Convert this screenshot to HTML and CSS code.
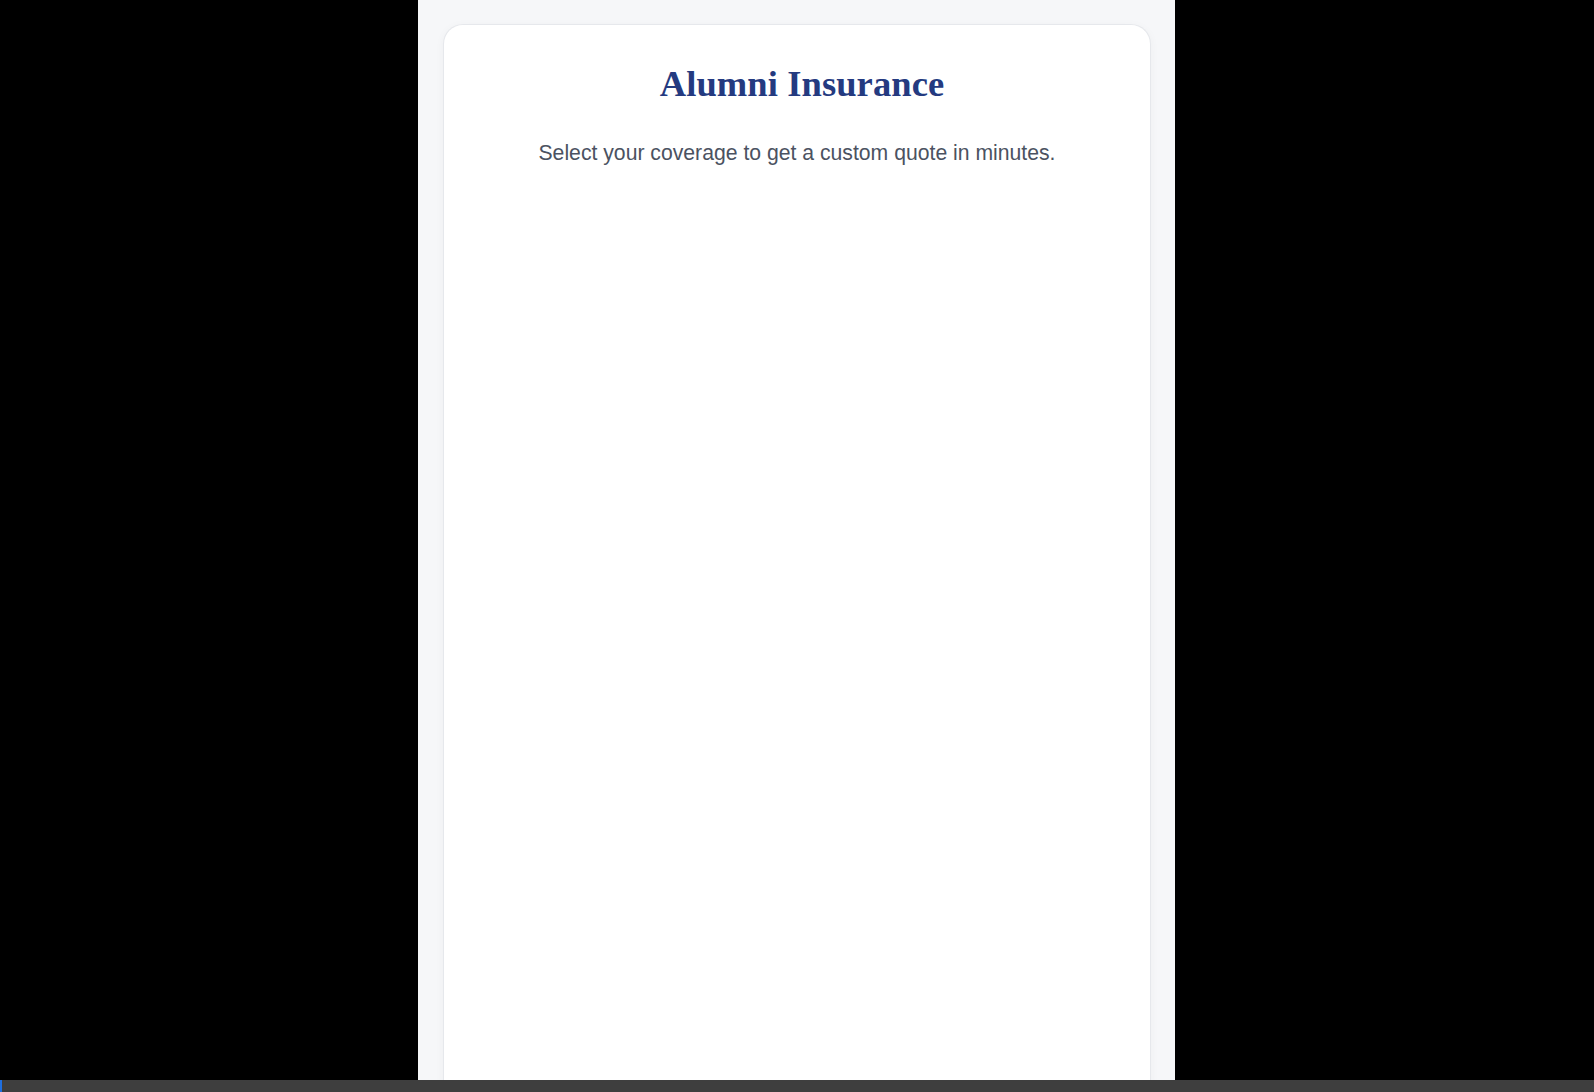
FILE: index.html
```html
<!DOCTYPE html>
<html lang="en">
<head>
<meta charset="utf-8">
<title>Alumni Insurance</title>
<link rel="stylesheet" href="styles.css">
</head>
<body>
<div class="stage">
  <main class="column">
    <section class="card">
      <h1 class="title">Alumni Insurance</h1>
      <p class="subtitle">Select your coverage to get a custom quote in minutes.</p>
    </section>
  </main>
</div>
<div class="bottom-bar"><span class="bottom-bar__mark"></span></div>
</body>
</html>
```
FILE: styles.css
```css
html, body {
  margin: 0;
  padding: 0;
  height: 100%;
  background: #000;
  overflow: hidden;
}

.stage {
  display: flex;
  height: 1092px;
}

.column {
  width: 757px;
  margin-left: 418px;
  background: #f6f7f9;
  padding: 24px 24px 0 25px;
  box-sizing: border-box;
  display: flex;
  flex-direction: column;
}

.card {
  flex: 1;
  background: #ffffff;
  border: 1px solid #e6e8ec;
  border-bottom: none;
  border-radius: 20px 20px 0 0;
  box-shadow: 0 2px 10px rgba(30, 40, 60, 0.04);
  padding: 37px 24px 0;
  text-align: center;
}

.title {
  margin: 0;
  padding-left: 10px;
  font-family: "Liberation Serif", "Times New Roman", serif;
  font-weight: 700;
  font-size: 36.5px;
  letter-spacing: 0.1px;
  line-height: 44px;
  color: #243a80;
}

.subtitle {
  margin: 32px 0 0;
  font-family: "Liberation Sans", Arial, Helvetica, sans-serif;
  font-size: 21.2px;
  line-height: 30px;
  color: #4b5261;
}

.bottom-bar {
  position: fixed;
  left: 0;
  right: 0;
  bottom: 0;
  height: 12px;
  background: #3e3e3e;
  display: flex;
}

.bottom-bar__mark {
  width: 2px;
  background: #1f6fe0;
}
```
